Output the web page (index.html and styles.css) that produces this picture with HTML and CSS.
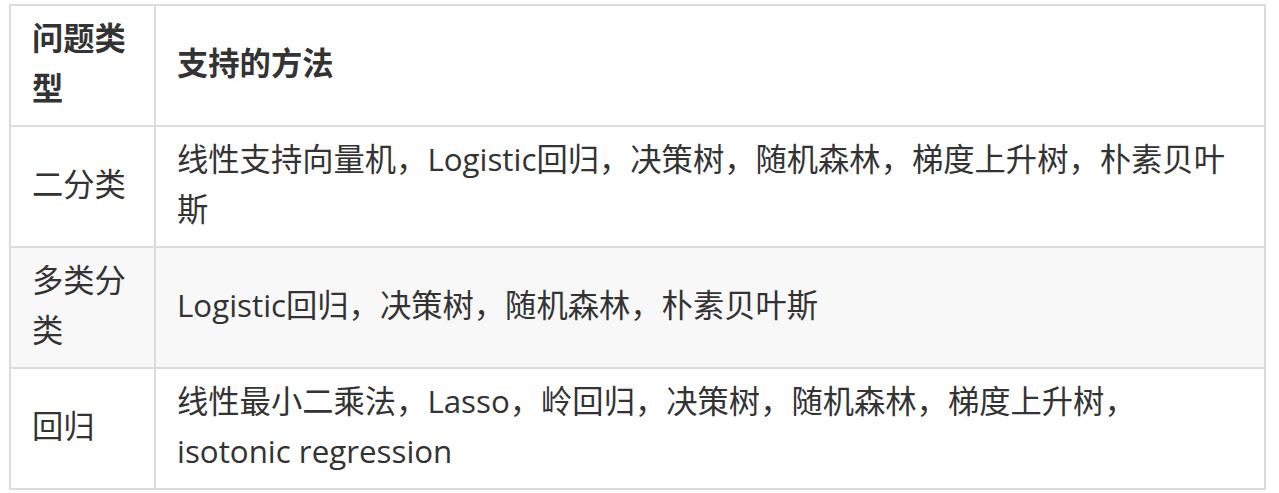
FILE: index.html
```html
<!DOCTYPE html>
<html lang="zh-CN">
<head>
<meta charset="utf-8">
<title>支持的方法</title>
<link rel="stylesheet" href="styles.css">
</head>
<body>
<div class="wrap">
<table class="methods">
  <colgroup>
    <col class="c1">
    <col class="c2">
  </colgroup>
  <thead>
    <tr><th>问题类型</th><th>支持的方法</th></tr>
  </thead>
  <tbody>
    <tr><td>二分类</td><td>线性支持向量机，Logistic回归，决策树，随机森林，梯度上升树，朴素贝叶斯</td></tr>
    <tr class="alt"><td>多类分类</td><td>Logistic回归，决策树，随机森林，朴素贝叶斯</td></tr>
    <tr><td>回归</td><td>线性最小二乘法，Lasso，岭回归，决策树，随机森林，梯度上升树，isotonic regression</td></tr>
  </tbody>
</table>
</div>
</body>
</html>
```
FILE: styles.css
```css
html, body {
  margin: 0;
  padding: 0;
  background: #ffffff;
}
.wrap {
  padding: 4px 13px 0 9px;
}
.methods {
  width: 1257px;
  border-collapse: collapse;
  table-layout: fixed;
  font-family: "Open Sans", "Noto Sans CJK SC", sans-serif;
  font-size: 31.3px;
  line-height: 50px;
  color: #333333;
}
.c1 { width: 145px; }
.methods th,
.methods td {
  border: 2px solid #dcdcdc;
  padding: 7px 20px 12px 21px;
  text-align: left;
  vertical-align: middle;
}
.methods th {
  font-weight: 700;
}
.methods .alt td {
  background: #f8f8f8;
}
```
